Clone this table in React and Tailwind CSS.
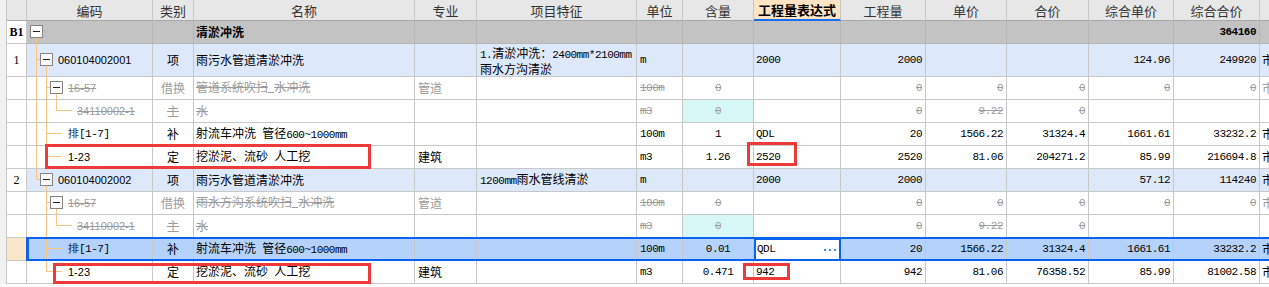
import React from "react";

const GRID =
  "grid grid-cols-[7px_20px_126px_41px_221px_62px_160px_46px_71px_87px_85px_81px_82px_85px_86px_60px]";
const CJK = "font-['Noto_Sans_CJK_SC',sans-serif] text-[12px]";
const MONO = "font-['Liberation_Mono',monospace] text-[11px] tracking-[-0.5px]";
const SANS = "font-['Liberation_Sans',sans-serif] text-[11px]";
const ORANGE = "#fcc47c";

const L0 = 9.5;
const L1 = 19.5;
const L2 = 29.5;

function Mix({ text }) {
  if (!text) return null;
  const parts = String(text).split(/([\x20-\x7E]+)/).filter(Boolean);
  return (
    <span className="whitespace-pre">
      {parts.map((p, i) =>
        /^[\x20-\x7E]+$/.test(p) ? (
          <span key={i} className={MONO}>
            {p}
          </span>
        ) : (
          <span key={i}>{p}</span>
        )
      )}
    </span>
  );
}

function Tree({ h, items }) {
  const ch = h - 1;
  const bt = Math.floor((ch - 13) / 2);
  const mid = bt + 6.5;
  const yv = { top: 0, bot: h, mid: mid, boxb: bt + 13 };
  return (
    <svg
      className="absolute left-0 top-0 overflow-visible pointer-events-none"
      width="126"
      height={h}
    >
      {items.map((it, i) => {
        if (it.v !== undefined)
          return (
            <line
              key={i}
              x1={it.v}
              x2={it.v}
              y1={yv[it.from]}
              y2={yv[it.to]}
              stroke={ORANGE}
              strokeWidth="1"
            />
          );
        if (it.h)
          return (
            <line
              key={i}
              x1={it.h[0] - 0.5}
              x2={it.h[1]}
              y1={mid}
              y2={mid}
              stroke={ORANGE}
              strokeWidth="1"
            />
          );
        return (
          <g key={i}>
            <rect
              x={it.box + 0.5}
              y={bt + 0.5}
              width="12"
              height="12"
              fill="#ffffff"
              stroke="#858585"
              strokeWidth="1"
            />
            <line
              x1={it.box + 3}
              x2={it.box + 10}
              y1={mid}
              y2={mid}
              stroke="#222"
              strokeWidth="1"
            />
          </g>
        );
      })}
    </svg>
  );
}

function Row({
  h = 23,
  bg = "bg-white",
  bc = "border-[#c8c8c8]",
  rn = "",
  rnBold = false,
  rnBg = "bg-white",
  tree = [],
  code = "",
  codePl = "pl-[31px]",
  kind = "",
  name = "",
  nameBold = false,
  major = "",
  spec = null,
  unit = "",
  qty = "",
  qtyBg = "",
  expr = "",
  amt = "",
  price = "",
  total = "",
  cprice = "",
  ctotal = "",
  ctotalBold = false,
  extra = "",
  gray = [],
  strike = [],
  selected = false,
}) {
  const base = `flex items-center overflow-hidden whitespace-nowrap border-r border-b ${bc}`;
  const st = (k) =>
    `${gray.includes(k) ? "text-[#9c9c9c]" : "text-black"} ${
      strike.includes(k) ? "line-through" : ""
    }`;
  const num = (k, v, bold) => (
    <div className={`${base} ${bg} justify-end pr-[3px] ${MONO} ${bold ? "font-bold" : ""} ${st(k)}`}>
      {v}
    </div>
  );
  return (
    <div className={`relative ${GRID} ${h === 33 ? "h-[33px]" : "h-[23px]"}`}>
      <div className="bg-[#f2f2f2] border-r border-[#c8c8c8]" />
      <div
        className={`flex items-center justify-center border-r border-b border-[#c8c8c8] ${rnBg} font-['Liberation_Serif',serif] text-[12px] ${
          rnBold ? "font-bold" : ""
        }`}
      >
        {rn}
      </div>
      <div className={`${base} ${bg} relative ${codePl} ${SANS} ${st("code")}`}>
        <Tree h={h} items={tree} />
        <span className="relative">{code}</span>
      </div>
      <div className={`${base} ${bg} justify-center ${CJK} ${st("kind")}`}>{kind}</div>
      <div className={`${base} ${bg} pl-[2px] ${CJK} ${nameBold ? "font-bold" : ""} ${st("name")}`}>
        <Mix text={name} />
      </div>
      <div className={`${base} ${bg} pl-[3px] ${CJK} ${st("major")}`}>{major}</div>
      <div className={`${base} ${bg} pl-[3px] ${CJK} ${st("spec")}`}>{spec}</div>
      <div className={`${base} ${bg} pl-[3px] ${MONO} ${st("unit")}`}>{unit}</div>
      <div className={`${base} ${qtyBg || bg} justify-center ${MONO} ${st("qty")}`}>{qty}</div>
      {selected ? (
        <div className={`flex items-center overflow-hidden whitespace-nowrap border-2 border-[#0a63ef] bg-white pl-[1px] ${MONO} text-black`}>
          <span>{expr}</span>
          <svg className="ml-auto mr-[3px]" width="12" height="4">
            <rect x="0" y="1" width="2" height="2" fill="#3b8fe0" />
            <rect x="5" y="1" width="2" height="2" fill="#3b8fe0" />
            <rect x="10" y="1" width="2" height="2" fill="#3b8fe0" />
          </svg>
        </div>
      ) : (
        <div className={`${base} ${bg} pl-[2px] ${MONO} ${st("expr")}`}>{expr}</div>
      )}
      {num("amt", amt)}
      {num("price", price)}
      {num("total", total)}
      {num("cprice", cprice)}
      {num("ctotal", ctotal, ctotalBold)}
      <div className={`${base} ${bg} pl-[2px] ${CJK} ${st("extra")}`}>{extra}</div>
      {selected && (
        <div className="absolute left-[26px] right-[-10px] top-[-1px] bottom-0 border-2 border-l-[3px] border-[#0a63ef] pointer-events-none" />
      )}
    </div>
  );
}

const HEADS = [
  "编码",
  "类别",
  "名称",
  "专业",
  "项目特征",
  "单位",
  "含量",
  "工程量表达式",
  "工程量",
  "单价",
  "合价",
  "综合单价",
  "综合合价",
  "",
];

function Header() {
  return (
    <div className={`${GRID} h-[21px]`}>
      <div className="bg-[#f2f2f2] border-r border-[#c8c8c8]" />
      <div className="border-r border-b border-r-[#c8c8c8] border-b-[#a8a8a8] bg-[#e7e7e7]" />
      {HEADS.map((t, i) =>
        t === "工程量表达式" ? (
          <div
            key={i}
            className={`flex items-center justify-center border-r border-r-[#c8c8c8] border-b-2 border-b-[#1a6ff0] bg-[#fde4c4] ${CJK} text-[13px] font-bold text-black leading-none`}
          >
            {t}
          </div>
        ) : (
          <div
            key={i}
            className={`flex items-center justify-center border-r border-b border-r-[#c8c8c8] border-b-[#a8a8a8] bg-[#e7e7e7] ${CJK} text-[13px] text-[#333] leading-none`}
          >
            {t}
          </div>
        )
      )}
    </div>
  );
}

const STRIKE_A = {
  gray: ["code", "kind", "name", "major", "unit", "qty", "amt", "price", "total", "cprice", "ctotal", "extra"],
  strike: ["code", "name", "unit", "qty", "amt", "price", "total", "cprice", "ctotal"],
};
const STRIKE_B = {
  gray: ["code", "kind", "name", "unit", "qty", "amt", "price", "total"],
  strike: ["code", "kind", "name", "unit", "qty", "amt", "price", "total"],
};

export default function App() {
  const item = "bg-[#dde8fb]";
  return (
    <div className="relative w-[1269px] h-[287px] overflow-hidden bg-white text-black">
      <Header />
      <Row
        bg="bg-[#c3c3c3]"
        bc="border-[#b6b6b6]"
        rn="B1"
        rnBold
        tree={[{ box: 3 }, { v: L0, from: "boxb", to: "bot" }]}
        name="清淤冲洗"
        nameBold
        ctotal="364160"
        ctotalBold
      />
      <Row
        h={33}
        bg={item}
        rn="1"
        tree={[
          { v: L0, from: "top", to: "bot" },
          { h: [L0, 13] },
          { box: 13 },
          { v: L1, from: "boxb", to: "bot" },
        ]}
        codePl="pl-[31px]"
        code="060104002001"
        kind="项"
        name="雨污水管道清淤冲洗"
        spec={
          <div className="flex flex-col leading-[13px]">
            <div>
              <Mix text="1.清淤冲洗：2400mm*2100mm" />
            </div>
            <div>雨水方沟清淤</div>
          </div>
        }
        unit="m"
        expr="2000"
        amt="2000"
        cprice="124.96"
        ctotal="249920"
        extra="市"
      />
      <Row
        tree={[
          { v: L0, from: "top", to: "bot" },
          { v: L1, from: "top", to: "bot" },
          { h: [L1, 23] },
          { box: 23 },
          { v: L2, from: "boxb", to: "bot" },
        ]}
        codePl="pl-[41px]"
        code="16-57"
        kind="借换"
        name="管道系统吹扫 水冲洗"
        major="管道"
        unit="100m"
        qty="0"
        amt="0"
        price="0"
        total="0"
        cprice="0"
        ctotal="0"
        extra="市"
        {...STRIKE_A}
      />
      <Row
        tree={[
          { v: L0, from: "top", to: "bot" },
          { v: L1, from: "top", to: "bot" },
          { v: L2, from: "top", to: "mid" },
          { h: [L2, 45] },
        ]}
        codePl="pl-[50px]"
        code="34110002-1"
        kind="主"
        name="水"
        unit="m3"
        qty="0"
        qtyBg="bg-[#d7f6f6]"
        amt="0"
        price="9.22"
        total="0"
        {...STRIKE_B}
      />
      <Row
        tree={[
          { v: L0, from: "top", to: "bot" },
          { v: L1, from: "top", to: "bot" },
          { h: [L1, 35] },
        ]}
        codePl="pl-[41px]"
        code={<Mix text="排[1-7]" />}
        kind="补"
        name="射流车冲洗 管径600~1000mm"
        unit="100m"
        qty="1"
        expr="QDL"
        amt="20"
        price="1566.22"
        total="31324.4"
        cprice="1661.61"
        ctotal="33232.2"
        extra="市"
      />
      <Row
        tree={[
          { v: L0, from: "top", to: "bot" },
          { v: L1, from: "top", to: "mid" },
          { h: [L1, 35] },
        ]}
        codePl="pl-[41px]"
        code="1-23"
        kind="定"
        name="挖淤泥、流砂 人工挖"
        major="建筑"
        unit="m3"
        qty="1.26"
        expr="2520"
        amt="2520"
        price="81.06"
        total="204271.2"
        cprice="85.99"
        ctotal="216694.8"
        extra="市"
      />
      <Row
        bg={item}
        rn="2"
        tree={[
          { v: L0, from: "top", to: "mid" },
          { h: [L0, 13] },
          { box: 13 },
          { v: L1, from: "boxb", to: "bot" },
        ]}
        code="060104002002"
        kind="项"
        name="雨污水管道清淤冲洗"
        spec={<Mix text="1200mm雨水管线清淤" />}
        unit="m"
        expr="2000"
        amt="2000"
        cprice="57.12"
        ctotal="114240"
        extra="市"
      />
      <Row
        tree={[
          { v: L1, from: "top", to: "bot" },
          { h: [L1, 23] },
          { box: 23 },
          { v: L2, from: "boxb", to: "bot" },
        ]}
        codePl="pl-[41px]"
        code="16-57"
        kind="借换"
        name="雨水方沟系统吹扫 水冲洗"
        major="管道"
        unit="100m"
        qty="0"
        amt="0"
        price="0"
        total="0"
        cprice="0"
        ctotal="0"
        extra="市"
        {...STRIKE_A}
      />
      <Row
        tree={[
          { v: L1, from: "top", to: "bot" },
          { v: L2, from: "top", to: "mid" },
          { h: [L2, 45] },
        ]}
        codePl="pl-[50px]"
        code="34110002-1"
        kind="主"
        name="水"
        unit="m3"
        qty="0"
        qtyBg="bg-[#d7f6f6]"
        amt="0"
        price="9.22"
        total="0"
        {...STRIKE_B}
      />
      <Row
        bg="bg-[#b5d3fa]"
        rnBg="bg-[#fde6c8]"
        selected
        tree={[{ v: L1, from: "top", to: "bot" }, { h: [L1, 35] }]}
        codePl="pl-[41px]"
        code={<Mix text="排[1-7]" />}
        kind="补"
        name="射流车冲洗 管径600~1000mm"
        unit="100m"
        qty="0.01"
        expr="QDL"
        amt="20"
        price="1566.22"
        total="31324.4"
        cprice="1661.61"
        ctotal="33232.2"
        extra="市"
      />
      <Row
        tree={[{ v: L1, from: "top", to: "mid" }, { h: [L1, 35] }]}
        codePl="pl-[41px]"
        code="1-23"
        kind="定"
        name="挖淤泥、流砂 人工挖"
        major="建筑"
        unit="m3"
        qty="0.471"
        expr="942"
        amt="942"
        price="81.06"
        total="76358.52"
        cprice="85.99"
        ctotal="81002.58"
        extra="市"
      />

      <div className="absolute left-[45px] top-[144px] w-[326px] h-[25px] border-[3px] border-[#ef3a3a] pointer-events-none" />
      <div className="absolute left-[747px] top-[142px] w-[50px] h-[24px] border-[3px] border-[#ef3a3a] pointer-events-none" />
      <div className="absolute left-[53px] top-[263px] w-[318px] h-[21px] border-[3px] border-[#ef3a3a] pointer-events-none" />
      <div className="absolute left-[743px] top-[263px] w-[47px] h-[17px] border-[3px] border-[#ef3a3a] pointer-events-none" />
    </div>
  );
}
